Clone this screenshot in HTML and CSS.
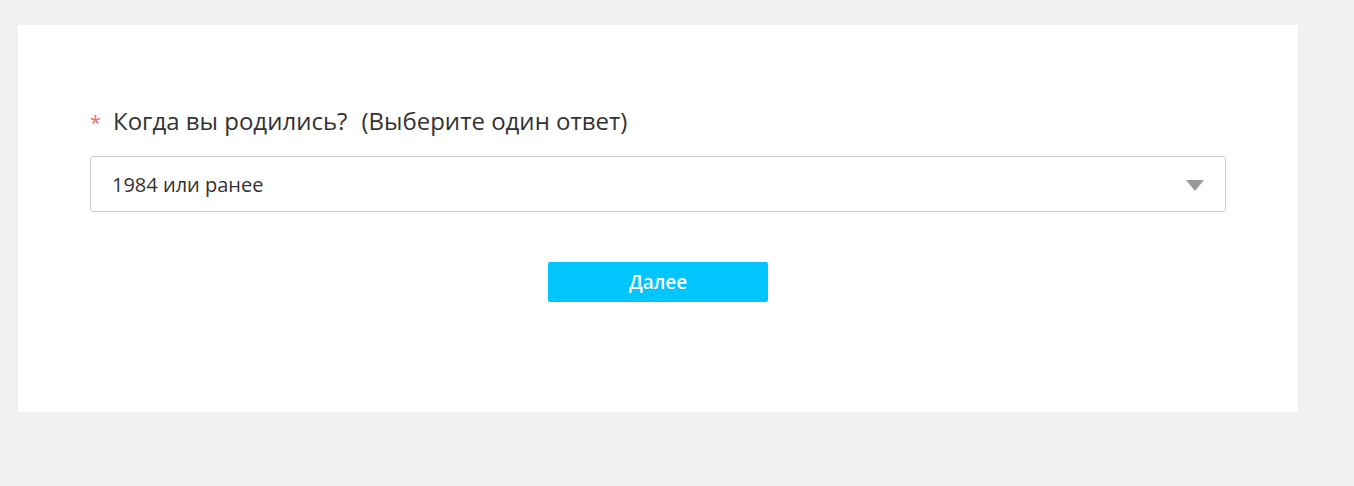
FILE: index.html
```html
<!DOCTYPE html>
<html lang="ru">
<head>
    <meta charset="UTF-8">
    <meta name="viewport" content="width=device-width, initial-scale=1.0">
    <title>Опрос</title>
    <link rel="stylesheet" href="styles.css">
</head>
<body>
    <div class="card">
        <form class="question">
            <div class="question-title">
                <span class="required">*</span>
                <span class="title-text">Когда вы родились?</span>
                <span class="title-hint">(Выберите один ответ)</span>
            </div>

            <div class="select-box">
                <span class="select-value">1984 или ранее</span>
                <span class="select-arrow"></span>
            </div>

            <div class="actions">
                <button type="button" class="next-btn">Далее</button>
            </div>
        </form>
    </div>
</body>
</html>
```

FILE: styles.css
```css
body {
    margin: 0;
    padding: 25px 0 0 18px;
    background-color: #f1f1f1;
    font-family: "Open Sans", "Noto Sans", sans-serif;
    color: #333;
}

.card {
    width: 1280px;
    height: 387px;
    box-sizing: border-box;
    background-color: #fff;
    padding: 81px 72px 0 72px;
}

.question-title {
    display: flex;
    align-items: baseline;
    font-size: 24px;
    line-height: 30px;
    color: #333;
}

.required {
    color: #f26b6b;
    font-size: 20px;
    width: 23px;
}

.title-hint {
    margin-left: 14px;
}

.select-box {
    display: flex;
    align-items: center;
    justify-content: space-between;
    margin-top: 18px;
    height: 56px;
    box-sizing: border-box;
    border: 1px solid #cccccc;
    border-radius: 3px;
    padding: 0 21px 0 21px;
}

.select-value {
    font-size: 20px;
    color: #333;
}

.select-arrow {
    width: 0;
    height: 0;
    border-left: 9px solid transparent;
    border-right: 9px solid transparent;
    border-top: 11px solid #999;
    margin-top: 2px;
}

.actions {
    display: flex;
    justify-content: center;
    margin-top: 50px;
}

.next-btn {
    width: 220px;
    height: 40px;
    border: none;
    border-radius: 2px;
    background-color: #00c5ff;
    color: #fff;
    font-family: inherit;
    font-size: 19px;
    font-weight: 600;
    cursor: pointer;
}
```
